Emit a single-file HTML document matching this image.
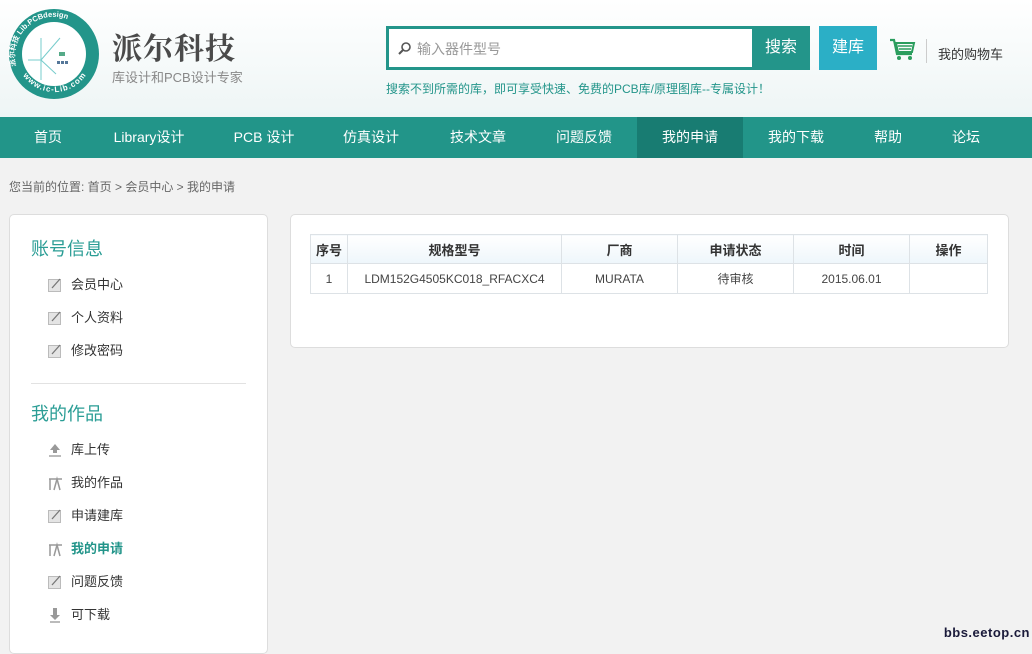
<!DOCTYPE html>
<html><head><meta charset="utf-8">
<style>
*{margin:0;padding:0;box-sizing:border-box}
body{width:1032px;height:647px;overflow:hidden;background:#f2f2f2;font-family:"Liberation Sans","Noto Sans CJK SC",sans-serif;position:relative;color:#333}
.hdr{position:absolute;left:0;top:0;width:1032px;height:117px;background:linear-gradient(#fff,#eef5f5)}
.abs{position:absolute}
.nav{position:absolute;left:0;top:117px;width:1032px;height:41px;background:#229589}
.nav span{position:absolute;top:0;height:41px;line-height:41px;color:#fff;font-size:14px;text-align:center}
.side{position:absolute;left:9px;top:214px;width:259px;height:440px;background:#fff;border:1px solid #ddd;border-radius:5px}
.side h3{position:absolute;left:21px;font-size:18px;font-weight:normal;color:#2a9d95}
.item{position:absolute;left:38px;font-size:13px;color:#333;height:16px;line-height:16px}
.item svg{position:absolute;left:0;top:1px}
.item b{position:absolute;left:23px;white-space:nowrap;font-weight:normal}
.main{position:absolute;left:290px;top:214px;width:719px;height:134px;background:#fff;border:1px solid #ddd;border-radius:5px}
table{position:absolute;left:19px;top:19px;border-collapse:collapse;font-size:12px}
td,th{border:1px solid #dde2e6;text-align:center;color:#444}
th{height:29px;background:linear-gradient(#fff,#eef6fb);font-weight:bold;color:#333;font-size:13px}
td{height:30px}
</style></head><body>
<div class="hdr"></div>
<svg class="abs" style="left:8px;top:8px" width="92" height="92" viewBox="0 0 92 92">
<circle cx="46" cy="46" r="45" fill="#23958a"/>
<circle cx="46" cy="46" r="32" fill="#fff"/>
<defs><path id="c1" d="M8 58 A39 39 0 0 1 84 38"/><path id="c2" d="M13 64 A38 38 0 0 0 80 64"/></defs>
<text font-size="7.5" font-weight="bold" fill="#fff" font-family="Liberation Sans,Noto Sans CJK SC,sans-serif"><textPath href="#c1">派尔科技 Lib.PCBdesign</textPath></text>
<text font-size="8" font-weight="bold" fill="#fff" font-family="Liberation Sans,sans-serif" letter-spacing="1"><textPath href="#c2" startOffset="4">www.ic-Lib.com</textPath></text>
<path d="M33 30V72M20 52H33M33 52L48 66M33 52L52 30" stroke="#7cc" stroke-width="1" fill="none"/>
<rect x="51" y="44" width="6" height="4" fill="#5a8"/><rect x="49" y="53" width="3" height="3" fill="#579"/><rect x="53" y="53" width="3" height="3" fill="#579"/><rect x="57" y="53" width="3" height="3" fill="#579"/>
</svg>
<div class="abs" style="left:112px;top:24px;font-size:30px;font-weight:bold;color:#4a4a4a;font-family:'Noto Serif CJK SC',serif;letter-spacing:1px">派尔科技</div>
<div class="abs" style="left:112px;top:67px;font-size:13px;color:#888">库设计和PCB设计专家</div>
<div class="abs" style="left:386px;top:26px;width:367px;height:44px;border:3px solid #23958a;border-right:none;background:#fff"></div>
<svg class="abs" style="left:398px;top:41px" width="14" height="14"><circle cx="8" cy="6" r="4" stroke="#555" stroke-width="1.6" fill="none"/><path d="M5 9L1 13" stroke="#555" stroke-width="2"/></svg>
<div class="abs" style="left:417px;top:39px;font-size:14px;color:#999">输入器件型号</div>
<div class="abs" style="left:752px;top:26px;width:58px;height:44px;background:#23958a;color:#fff;font-size:16px;line-height:44px;text-align:center">搜索</div>
<div class="abs" style="left:819px;top:26px;width:58px;height:44px;background:#2bafc6;color:#fff;font-size:16px;line-height:44px;text-align:center">建库</div>
<svg class="abs" style="left:889px;top:38px" width="28" height="24" viewBox="0 0 28 24"><path d="M1 2H5L8 16H23" stroke="#2a9d5d" stroke-width="2.2" fill="none"/><path d="M7 5H25L23 14H9Z" fill="none" stroke="#2a9d5d" stroke-width="2"/><path d="M9 8H23M10 11H22" stroke="#2a9d5d" stroke-width="1.5"/><circle cx="10" cy="20" r="2" fill="#2a9d5d"/><circle cx="21" cy="20" r="2" fill="#2a9d5d"/></svg>
<div class="abs" style="left:926px;top:39px;width:1px;height:24px;background:#ccc"></div>
<div class="abs" style="left:938px;top:44px;font-size:13px;color:#333">我的购物车</div>
<div class="abs" style="left:386px;top:80px;font-size:12px;color:#23958a">搜索不到所需的库，即可享受快速、免费的PCB库/原理图库--专属设计！</div>
<div class="nav">
<span style="left:0;width:96px">首页</span>
<span style="left:96px;width:106px">Library设计</span>
<span style="left:212px;width:104px">PCB 设计</span>
<span style="left:318px;width:106px">仿真设计</span>
<span style="left:425px;width:106px">技术文章</span>
<span style="left:531px;width:106px">问题反馈</span>
<span style="left:637px;width:106px;background:#187c72">我的申请</span>
<span style="left:743px;width:106px">我的下载</span>
<span style="left:849px;width:78px">帮助</span>
<span style="left:927px;width:78px">论坛</span>
</div>
<div class="abs" style="left:9px;top:178px;font-size:12px;color:#666">您当前的位置: 首页 &gt; 会员中心 &gt; 我的申请</div>
<div class="side">
<h3 style="top:20px">账号信息</h3>
<div class="item" style="top:62px"><svg width="14" height="14"><rect x="0.5" y="1.5" width="12" height="12" fill="#e4e4e4" stroke="#bbb"/><path d="M4 10L12 1" stroke="#777" stroke-width="1.3"/></svg><b>会员中心</b></div>
<div class="item" style="top:95px"><svg width="14" height="14"><rect x="0.5" y="1.5" width="12" height="12" fill="#e4e4e4" stroke="#bbb"/><path d="M4 10L12 1" stroke="#777" stroke-width="1.3"/></svg><b>个人资料</b></div>
<div class="item" style="top:128px"><svg width="14" height="14"><rect x="0.5" y="1.5" width="12" height="12" fill="#e4e4e4" stroke="#bbb"/><path d="M4 10L12 1" stroke="#777" stroke-width="1.3"/></svg><b>修改密码</b></div>
<div class="abs" style="left:21px;top:168px;width:215px;height:1px;background:#e2e2e2"></div>
<h3 style="top:185px">我的作品</h3>
<div class="item" style="top:227px"><svg width="14" height="14"><path d="M7 1L12 7H9V10H5V7H2Z" fill="#999"/><rect x="1" y="12" width="12" height="2" fill="#bbb"/></svg><b>库上传</b></div>
<div class="item" style="top:260px"><svg width="15" height="15"><path d="M1 3H14M2 3V14M6 14L9 3L12 14" stroke="#999" stroke-width="1.5" fill="none"/></svg><b>我的作品</b></div>
<div class="item" style="top:293px"><svg width="14" height="14"><rect x="0.5" y="1.5" width="12" height="12" fill="#e4e4e4" stroke="#bbb"/><path d="M4 10L12 1" stroke="#777" stroke-width="1.3"/></svg><b>申请建库</b></div>
<div class="item" style="top:326px"><svg width="15" height="15"><path d="M1 3H14M2 3V14M6 14L9 3L12 14" stroke="#999" stroke-width="1.5" fill="none"/></svg><b style="font-weight:bold;color:#23958a">我的申请</b></div>
<div class="item" style="top:359px"><svg width="14" height="14"><rect x="0.5" y="1.5" width="12" height="12" fill="#e4e4e4" stroke="#bbb"/><path d="M4 10L12 1" stroke="#777" stroke-width="1.3"/></svg><b>问题反馈</b></div>
<div class="item" style="top:392px"><svg width="14" height="15"><path d="M5 0H9V7H12L7 12L2 7H5Z" fill="#999"/><rect x="2" y="13" width="10" height="2" fill="#bbb"/></svg><b>可下载</b></div>
</div>
<div class="main">
<table>
<tr><th style="width:37px">序号</th><th style="width:214px">规格型号</th><th style="width:116px">厂商</th><th style="width:116px">申请状态</th><th style="width:116px">时间</th><th style="width:78px">操作</th></tr>
<tr><td>1</td><td>LDM152G4505KC018_RFACXC4</td><td>MURATA</td><td>待审核</td><td>2015.06.01</td><td></td></tr>
</table>
</div>
<div class="abs" style="right:2px;top:625px;font-size:13px;font-weight:bold;color:#1a1a3a;font-family:'Liberation Sans',sans-serif;letter-spacing:0.5px">bbs.eetop.cn</div>
</body></html>
